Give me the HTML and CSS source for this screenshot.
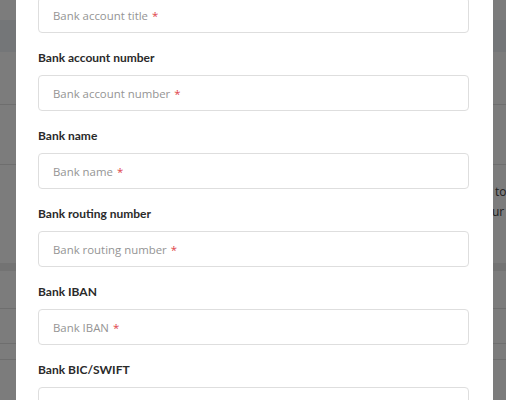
FILE: index.html
```html
<!DOCTYPE html>
<html lang="en">
<head>
<meta charset="utf-8">
<title>Bank details</title>
<link rel="stylesheet" href="styles.css">
</head>
<body>
<div class="page">
  <div class="row row-top"></div>
  <div class="row row-band"></div>
  <div class="row row-a"></div>
  <div class="row row-b"></div>
  <div class="row row-text">
    <p class="bg-line bg-line1">to</p>
    <p class="bg-line bg-line2">ur a</p>
  </div>
  <div class="row row-band2"></div>
  <div class="row row-c"></div>
  <div class="row row-d"></div>
  <div class="row row-e"></div>
  <div class="row row-f"></div>
</div>
<div class="overlay"></div>
<div class="modal">
  <form class="form">
    <div class="field">
      <div class="input"><span class="ph">Bank account title</span><span class="req">*</span></div>
    </div>
    <div class="field">
      <label class="label">Bank account number</label>
      <div class="input"><span class="ph">Bank account number</span><span class="req">*</span></div>
    </div>
    <div class="field">
      <label class="label">Bank name</label>
      <div class="input"><span class="ph">Bank name</span><span class="req">*</span></div>
    </div>
    <div class="field">
      <label class="label">Bank routing number</label>
      <div class="input"><span class="ph">Bank routing number</span><span class="req">*</span></div>
    </div>
    <div class="field">
      <label class="label">Bank IBAN</label>
      <div class="input"><span class="ph">Bank IBAN</span><span class="req">*</span></div>
    </div>
    <div class="field">
      <label class="label">Bank BIC/SWIFT</label>
      <div class="input"></div>
    </div>
  </form>
</div>
</body>
</html>
```
FILE: styles.css
```css
* { box-sizing: border-box; }
html, body { margin: 0; padding: 0; }
body {
  width: 506px;
  height: 400px;
  overflow: hidden;
  position: relative;
  background: #fff;
  font-family: "Open Sans", "Noto Sans", sans-serif;
}
.page {
  display: flex;
  flex-direction: column;
  width: 506px;
}
.row { width: 100%; background: #fff; }
.row-top { height: 20px; }
.row-band { height: 32px; background: #eef2f7; }
.row-a { height: 53px; border-bottom: 1px solid #e2e2e2; }
.row-b { height: 60px; border-bottom: 1px solid #e2e2e2; }
.row-text {
  height: 98px;
  padding-top: 18px;
  display: flex;
  flex-direction: column;
  gap: 3px;
}
.bg-line {
  margin: 0;
  font-size: 12px;
  line-height: 17px;
  color: #444;
  white-space: nowrap;
}
.bg-line1 { padding-left: 495px; }
.bg-line2 { padding-left: 492px; }
.row-band2 { height: 8px; background: #ececec; }
.row-c { height: 38px; border-bottom: 1px solid #e2e2e2; }
.row-d { height: 35px; border-bottom: 1px solid #e2e2e2; }
.row-e { height: 16px; border-bottom: 1px solid #e2e2e2; }
.row-f { height: 60px; }
.overlay {
  position: absolute;
  inset: 0;
  background: rgba(0, 0, 0, 0.515);
}
.modal {
  position: absolute;
  left: 16px;
  top: -3px;
  width: 477px;
  height: 420px;
  background: #fff;
  padding: 0 24px 0 22px;
}
.form {
  display: flex;
  flex-direction: column;
  gap: 16px;
}
.field {
  display: flex;
  flex-direction: column;
  gap: 8px;
}
.label {
  font-family: "Lato", "Open Sans", sans-serif;
  font-weight: 700;
  font-size: 12px;
  line-height: 18px;
  color: #2a2a2a;
}
.input {
  height: 36px;
  border: 1px solid #dedede;
  border-radius: 4px;
  padding: 0 14px;
  display: flex;
  align-items: center;
  gap: 4px;
  font-size: 11.4px;
  color: #949494;
}
.req { color: #e0444a; }
```
